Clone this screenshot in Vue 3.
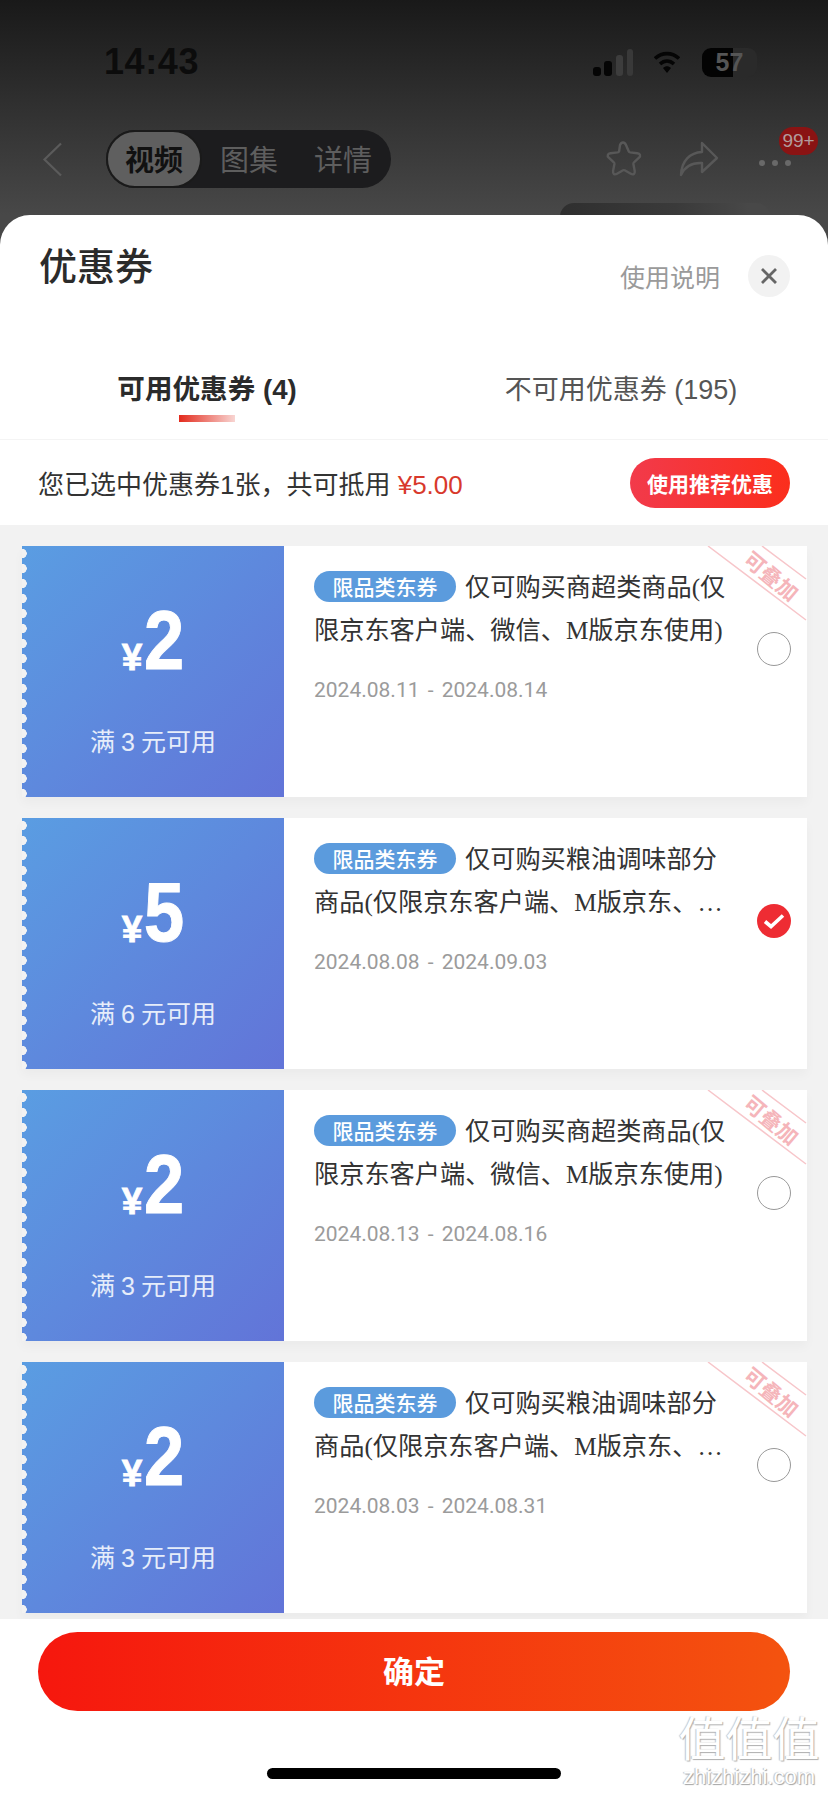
<template>
  <div class="page">
    <div class="backdrop">
      <div class="status-bar">
        <span class="time">14:43</span>
        <div class="status-icons">
          <svg class="signal" width="41" height="27" viewBox="0 0 41 27">
            <rect x="0" y="18" width="8" height="9" rx="3" fill="#050505" />
            <rect x="11" y="12" width="8" height="15" rx="3" fill="#050505" />
            <rect x="23" y="6" width="7" height="21" rx="3" fill="#3d3d3d" />
            <rect x="34" y="0" width="6" height="27" rx="3" fill="#393939" />
          </svg>
          <svg class="wifi" width="26" height="24" viewBox="0 0 26 24">
            <path d="M1 8.500C8 2 18 2 25 8.500" fill="none" stroke="#050505" stroke-width="3.600" />
            <path d="M6 14c4.400-4 9.600-4 14 0" fill="none" stroke="#050505" stroke-width="3.600" />
            <path d="M9 18c2.600-2.200 5.400-2.200 8 0l-4 5z" fill="#050505" />
          </svg>
          <div class="battery">
            <span class="battery-fill"></span>
            <span class="battery-num">57</span>
          </div>
        </div>
      </div>

      <div class="nav-bar">
        <svg class="back" width="21" height="35" viewBox="0 0 21 35">
          <path d="M19 1.500 2.500 17.500 19 33.500" fill="none" stroke="#5b5b5b" stroke-width="2.200" />
        </svg>
        <div class="segment">
          <span class="seg-item active">视频</span>
          <span class="seg-item">图集</span>
          <span class="seg-item">详情</span>
        </div>
        <div class="nav-actions">
          <svg class="star" width="40" height="38" viewBox="0 0 40 38">
            <path d="M20 2.500c1.500 0 2.300 1 3 2.600l2.700 6.200c.3.700.8 1 1.500 1.100l7 .8c3 .4 3.800 2.500 1.800 4.500l-5 4.600c-.6.500-.7 1-.6 1.700l1.300 6.900c.5 3-1.300 4.300-3.900 2.800l-6.100-3.400c-.6-.3-1-.3-1.600 0l-6.100 3.400c-2.600 1.500-4.400.2-3.900-2.800l1.300-6.900c.1-.7 0-1.200-.6-1.700l-5-4.600c-2-2-1.200-4.100 1.800-4.500l7-.8c.7-.1 1.200-.4 1.500-1.100L17 5.100c.7-1.600 1.500-2.600 3-2.600z" fill="none" stroke="#585858" stroke-width="2.400" />
          </svg>
          <svg width="40" height="36" viewBox="0 0 40 36">
            <path d="M23 2 38 17 23 31V22C13 21.500 6 25 2 34 2.500 20 11 11.500 23 11z" fill="none" stroke="#585858" stroke-width="2.400" stroke-linejoin="round" />
          </svg>
          <div class="more">
            <i></i><i></i><i></i>
            <span class="badge">99+</span>
          </div>
        </div>
      </div>
      <div class="ghost"></div>
    </div>

    <div class="sheet">
      <div class="sheet-head">
        <h1 class="sheet-title">优惠券</h1>
        <div class="sheet-tools">
          <span class="help">使用说明</span>
          <span class="close">
            <svg width="18" height="18" viewBox="0 0 18 18">
              <path d="M2 2 16 16M16 2 2 16" stroke="#666" stroke-width="2.800" fill="none" />
            </svg>
          </span>
        </div>
      </div>

      <div class="tabs">
        <div class="tab current">
          <span class="tab-label">可用优惠券 (4)</span>
          <span class="tab-line"></span>
        </div>
        <div class="tab">
          <span class="tab-label">不可用优惠券 (195)</span>
        </div>
      </div>

      <div class="summary">
        <p class="summary-text">您已选中优惠券1张，共可抵用 <em>¥5.00</em></p>
        <button class="recommend">使用推荐优惠</button>
      </div>

      <div class="coupons">
        <div class="coupon" v-for="c in coupons" :key="c.id">
          <div class="coupon-left">
            <div class="amount">
              <span class="yen">¥</span><span class="value">{{ c.value }}</span>
            </div>
            <div class="limit">满 {{ c.limit }} 元可用</div>
          </div>
          <div class="coupon-right">
            <div class="coupon-body">
              <div class="coupon-title"><span class="tag">限品类东券</span>{{ c.title }}</div>
              <div class="coupon-date">{{ c.date }}</div>
            </div>
            <span class="radio" :class="{ checked: c.checked }">
              <svg v-if="c.checked" width="22" height="16" viewBox="0 0 22 16">
                <path d="M2 8.500 8 13.500 20 2.500" fill="none" stroke="#fff" stroke-width="3.600" />
              </svg>
            </span>
            <svg v-if="c.stack" class="ribbon" width="100" height="76" viewBox="0 0 100 76">
              <path d="M1 0 99 74M55 0 99 33" stroke="#f7c6ca" stroke-width="1.500" fill="none" />
              <text x="0" y="0" transform="translate(35 16) rotate(40)" class="ribbon-text">可叠加</text>
            </svg>
          </div>
        </div>
      </div>

      <div class="footer">
        <button class="confirm">确定</button>
        <span class="home-bar"></span>
      </div>
    </div>

    <div class="watermark">
      <div class="wm-logo">值值值</div>
      <div class="wm-url">zhizhizhi.com</div>
    </div>
  </div>
</template>

<script setup>
const superTitle = '仅可购买商超类商品(仅限京东客户端、微信、M版京东使用)'
const oilTitle = '仅可购买粮油调味部分商品(仅限京东客户端、M版京东、微信、手机QQ使用)'

const coupons = [
  { id: 1, value: 2, limit: 3, title: superTitle, date: '2024.08.11 - 2024.08.14', stack: true, checked: false },
  { id: 2, value: 5, limit: 6, title: oilTitle, date: '2024.08.08 - 2024.09.03', stack: false, checked: true },
  { id: 3, value: 2, limit: 3, title: superTitle, date: '2024.08.13 - 2024.08.16', stack: true, checked: false },
  { id: 4, value: 2, limit: 3, title: oilTitle, date: '2024.08.03 - 2024.08.31', stack: true, checked: false },
]
</script>

<style>
html, body {
  margin: 0;
  background: #fff;
}
</style>

<style scoped>
.page {
  position: relative;
  width: 828px;
  height: 1796px;
  overflow: hidden;
  background: #484848;
  font-family: "Liberation Sans", "Noto Sans CJK SC", sans-serif;
  color: #333;
}
.backdrop {
  position: relative;
  height: 215px;
  background: linear-gradient(180deg, #191919 0%, #484848 100%);
}
.status-bar {
  display: flex;
  justify-content: space-between;
  align-items: center;
  height: 44px;
  padding: 40px 71px 0 104px;
}
.time {
  font-size: 36px;
  font-weight: 700;
  letter-spacing: 0.600px;
  color: #0c0c0c;
}
.status-icons {
  display: flex;
  align-items: center;
  gap: 22px;
}
.signal {
  margin-right: -2px;
}
.battery {
  position: relative;
  width: 55px;
  height: 29px;
  border-radius: 9px;
  background: #2a2a2a;
  overflow: hidden;
}
.battery-fill {
  position: absolute;
  left: 0;
  top: 0;
  bottom: 0;
  width: 31px;
  background: #030303;
}
.battery-num {
  position: absolute;
  left: 0;
  right: 0;
  top: 0;
  text-align: center;
  font-size: 25px;
  line-height: 29px;
  font-weight: 700;
  color: #555;
}
.nav-bar {
  display: flex;
  align-items: center;
  height: 58px;
  margin-top: 46px;
  padding: 0 17px 0 42px;
}
.segment {
  display: flex;
  align-items: center;
  width: 285px;
  height: 58px;
  margin-left: 43px;
  border-radius: 29px;
  background: #1c1c1e;
  box-sizing: border-box;
}
.seg-item {
  display: flex;
  align-items: center;
  justify-content: center;
  box-sizing: border-box;
  width: 94px;
  height: 58px;
  padding-bottom: 3px;
  font-size: 29px;
  color: #5e5e5e;
}
.seg-item.active {
  width: 96px;
  border: 2px solid #1a1a1a;
  border-radius: 29px;
  background: #5f5f5f;
  color: #111;
  font-weight: 700;
}
.nav-actions {
  display: flex;
  align-items: center;
  margin-left: auto;
  gap: 40px;
}
.star {
  margin-right: -4px;
}
.more {
  position: relative;
  display: flex;
  gap: 7px;
  margin-top: 8px;
  padding-right: 20px;
}
.more i {
  width: 6px;
  height: 6px;
  border-radius: 50%;
  background: #696969;
}
.badge {
  position: absolute;
  right: -7px;
  top: -33px;
  width: 39px;
  height: 28px;
  border-radius: 14px;
  background: #8a1313;
  color: #b39c9c;
  font-size: 19px;
  line-height: 28px;
  text-align: center;
}
.ghost {
  position: absolute;
  left: 560px;
  top: 203px;
  width: 210px;
  height: 30px;
  border-radius: 14px;
  background: linear-gradient(90deg, #2f2f2f, #3a3a3a 55%, #484848 90%);
}
.sheet {
  position: relative;
  display: flex;
  flex-direction: column;
  height: 1581px;
  border-radius: 30px 30px 0 0;
  background: #fff;
}
.sheet-head {
  display: flex;
  justify-content: space-between;
  height: 135px;
  padding: 0 38px 0 39px;
}
.sheet-title {
  margin: 28px 0 0;
  font-size: 38px;
  line-height: 48px;
  font-weight: 500;
  color: #2b2b2b;
}
.sheet-tools {
  display: flex;
  align-items: center;
  gap: 28px;
  height: 42px;
  margin-top: 40px;
}
.help {
  font-size: 25px;
  color: #9a9a9a;
}
.close {
  display: flex;
  align-items: center;
  justify-content: center;
  width: 42px;
  height: 42px;
  border-radius: 50%;
  background: #f2f2f2;
}
.tabs {
  display: grid;
  grid-template-columns: 1fr 1fr;
  height: 90px;
  border-bottom: 1px solid #f4f4f4;
  box-sizing: border-box;
}
.tab {
  display: flex;
  flex-direction: column;
  align-items: center;
  padding-top: 20px;
}
.tab-label {
  font-size: 27px;
  line-height: 40px;
  color: #555;
}
.current .tab-label {
  font-size: 27.600px;
  font-weight: 700;
  color: #2b2b2b;
}
.tab-line {
  width: 56px;
  height: 7px;
  margin-top: 5px;
  background: linear-gradient(90deg, #e32a1c, #f8d5d2);
}
.summary {
  display: flex;
  align-items: center;
  justify-content: space-between;
  height: 85px;
  padding: 0 38px;
}
.summary-text {
  margin: 0;
  font-size: 26px;
  color: #333;
}
.summary-text em {
  font-style: normal;
  color: #d8392c;
}
.recommend {
  width: 160px;
  height: 50px;
  border: none;
  border-radius: 25px;
  padding: 0;
  background: linear-gradient(90deg, #f23a4b, #fb2e1c);
  color: #fff;
  font-family: inherit;
  font-size: 21px;
  font-weight: 700;
}
.coupons {
  display: flex;
  flex-direction: column;
  gap: 21px;
  height: 1094px;
  padding: 21px 21px 0 22px;
  box-sizing: border-box;
  background: #f2f2f2;
  overflow: hidden;
}
.coupon {
  display: flex;
  flex: none;
  height: 251px;
  background: #fff;
  box-shadow: 0 6px 10px rgba(0, 0, 0, 0.03);
}
.coupon-left {
  position: relative;
  display: flex;
  flex-direction: column;
  align-items: center;
  width: 262px;
  background: linear-gradient(135deg, #5a9de2 0%, #6274d8 100%);
  color: #fff;
}
.coupon-left::before {
  content: "";
  position: absolute;
  left: 0;
  top: 0;
  bottom: 0;
  width: 5px;
  background: radial-gradient(circle at 0 50%, #f2f2f2 4.500px, transparent 5px) 0 0 / 6px 15px repeat-y;
}
.amount {
  display: flex;
  align-items: flex-end;
  justify-content: center;
  height: 75px;
  margin-top: 57px;
  font-family: "Liberation Sans", sans-serif;
  font-weight: 700;
}
.yen {
  font-size: 37px;
  line-height: 33px;
  margin-bottom: 4px;
  margin-right: 2px;
  -webkit-text-stroke: 0.800px #fff;
}
.value {
  display: inline-block;
  font-size: 84px;
  line-height: 75px;
  -webkit-text-stroke: 1px #fff;
  transform: scaleX(0.86);
  transform-origin: left bottom;
  width: 40px;
}
.limit {
  margin-top: 46px;
  font-size: 25px;
  line-height: 36px;
  word-spacing: -1px;
  color: #e6edfa;
}
.coupon-right {
  position: relative;
  display: flex;
  flex: 1;
  min-width: 0;
  padding-left: 30px;
}
.coupon-body {
  width: 418px;
  padding-top: 20px;
  flex: none;
}
.coupon-title {
  display: -webkit-box;
  -webkit-box-orient: vertical;
  -webkit-line-clamp: 2;
  overflow: hidden;
  font-family: "Liberation Serif", "Noto Sans CJK SC", serif;
  font-size: 25.200px;
  line-height: 43px;
  color: #333;
}
.tag {
  display: inline-block;
  width: 142px;
  height: 31px;
  margin-right: 9px;
  border-radius: 16px;
  background: #5b9bdd;
  color: #fff;
  font-family: "Noto Sans CJK SC", sans-serif;
  font-size: 21px;
  font-weight: 500;
  line-height: 31px;
  text-align: center;
  vertical-align: 1px;
}
.coupon-date {
  margin-top: 23px;
  font-family: "Roboto", "Liberation Sans", sans-serif;
  font-size: 21px;
  line-height: 30px;
  word-spacing: 3px;
  color: #9b9b9b;
}
.radio {
  display: flex;
  align-items: center;
  justify-content: center;
  flex: none;
  width: 34px;
  height: 34px;
  margin-top: 86px;
  margin-left: 25px;
  box-sizing: border-box;
  border: 1.500px solid #999;
  border-radius: 50%;
}
.radio.checked {
  border: none;
  background: #ee2c33;
}
.ribbon {
  position: absolute;
  right: 0;
  top: 0;
}
.ribbon-text {
  font-family: "Noto Sans CJK SC", sans-serif;
  font-size: 21px;
  font-weight: 700;
  fill: #f5b5ba;
}
.footer {
  display: flex;
  flex-direction: column;
  align-items: center;
  flex: 1;
  background: #fff;
}
.confirm {
  width: 752px;
  height: 79px;
  margin-top: 13px;
  padding: 0 0 4px;
  border: none;
  border-radius: 40px;
  background: linear-gradient(90deg, #f6170e 0%, #f4530f 100%);
  color: #fff;
  font-family: inherit;
  font-size: 31px;
  font-weight: 700;
}
.home-bar {
  width: 294px;
  height: 11px;
  margin-top: 57px;
  border-radius: 6px;
  background: #000;
}
.watermark {
  position: absolute;
  right: 8px;
  top: 1714px;
  width: 142px;
  text-align: center;
  color: #fff;
}
.wm-logo {
  font-size: 47px;
  line-height: 52px;
  text-shadow: 1px 1px 1px #adadad, -1px 0 1px #c4c4c4;
}
.wm-url {
  font-size: 22px;
  line-height: 22px;
  text-shadow: 1px 1px 1px #a2a2a2, -1px 0 1px #bdbdbd;
}
</style>
